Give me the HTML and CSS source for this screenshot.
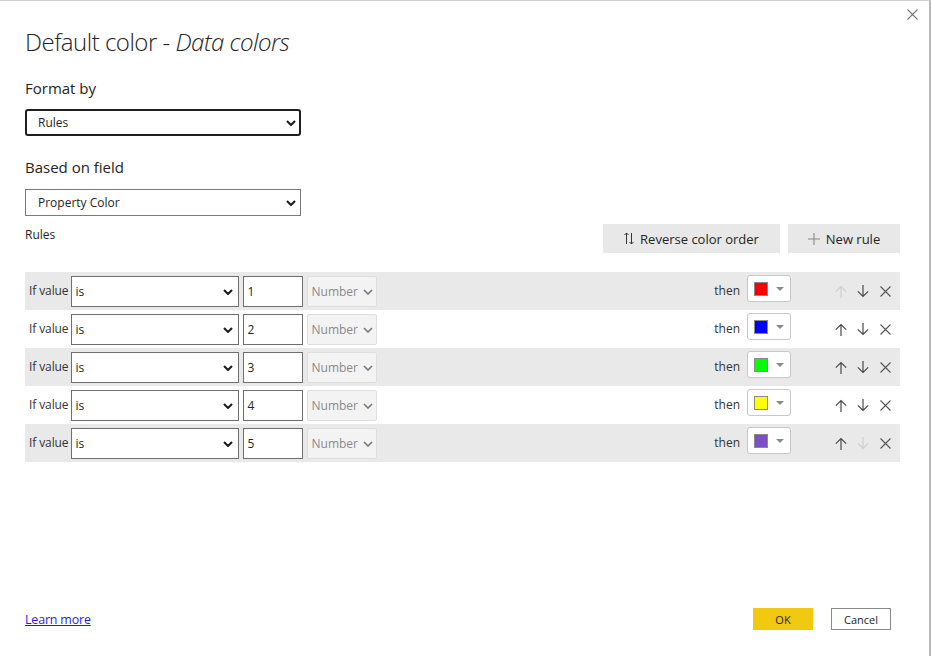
FILE: index.html
```html
<!DOCTYPE html>
<html lang="en">
<head>
<meta charset="utf-8">
<title>Default color - Data colors</title>
<link rel="stylesheet" href="styles.css">
</head>
<body>
<div class="dialog">
  <button class="close" aria-label="Close">
    <svg width="11" height="11" viewBox="0 0 11 11"><path d="M0.5 0.5 L10.5 10.5 M10.5 0.5 L0.5 10.5" stroke="#777" stroke-width="1.1" fill="none"/></svg>
  </button>

  <h1 class="title">Default color - <em>Data colors</em></h1>

  <div class="field-label">Format by</div>
  <div class="select select--focus">
    <span>Rules</span>
    <svg class="chev" width="10" height="6" viewBox="0 0 10 6"><path d="M1 1 L5 5 L9 1" stroke="#1a1a1a" stroke-width="2" fill="none"/></svg>
  </div>

  <div class="field-label field-label--second">Based on field</div>
  <div class="select select--field">
    <span>Property Color</span>
    <svg class="chev" width="10" height="6" viewBox="0 0 10 6"><path d="M1 1 L5 5 L9 1" stroke="#1a1a1a" stroke-width="2" fill="none"/></svg>
  </div>

  <div class="rules-head">
    <span class="small-label">Rules</span>
    <div class="toolbar">
      <button class="tool-btn tool-btn--reverse">
        <svg width="10" height="13" viewBox="0 0 10 13"><path d="M2.5 1 V12 M0.5 3 L2.5 1 L4.5 3 M7.5 1 V12 M5.5 10 L7.5 12 L9.5 10" stroke="#333" stroke-width="1" fill="none"/></svg>
        Reverse color order
      </button>
      <button class="tool-btn tool-btn--new">
        <svg width="12" height="12" viewBox="0 0 12 12"><path d="M6 0 V12 M0 6 H12" stroke="#8a8a8a" stroke-width="1.1" fill="none"/></svg>
        New rule
      </button>
    </div>
  </div>

  <div class="rules">
    <div class="rule rule--alt">
      <span class="if-label">If value</span>
      <div class="cond"><span>is</span><svg class="chev" width="10" height="6" viewBox="0 0 10 6"><path d="M1 1 L5 5 L9 1" stroke="#1a1a1a" stroke-width="2" fill="none"/></svg></div>
      <div class="val">1</div>
      <div class="type"><span>Number</span><svg width="10" height="6" viewBox="0 0 10 6"><path d="M1 1 L5 5 L9 1" stroke="#777" stroke-width="1.6" fill="none"/></svg></div>
      <span class="then">then</span>
      <div class="picker"><span class="swatch" style="background:#ff0000"></span><span class="caret"></span></div>
      <div class="actions">
        <svg class="act act--off" width="12" height="13" viewBox="0 0 12 13"><path d="M6 1.5 V13 M0.8 6.7 L6 1.5 L11.2 6.7" fill="none"/></svg>
        <svg class="act" width="12" height="13" viewBox="0 0 12 13"><path d="M6 0 V11.5 M0.8 6.3 L6 11.5 L11.2 6.3" fill="none"/></svg>
        <svg class="act act--x" width="11" height="11" viewBox="0 0 11 11"><path d="M0.5 0.5 L10.5 10.5 M10.5 0.5 L0.5 10.5" fill="none"/></svg>
      </div>
    </div>
    <div class="rule">
      <span class="if-label">If value</span>
      <div class="cond"><span>is</span><svg class="chev" width="10" height="6" viewBox="0 0 10 6"><path d="M1 1 L5 5 L9 1" stroke="#1a1a1a" stroke-width="2" fill="none"/></svg></div>
      <div class="val">2</div>
      <div class="type"><span>Number</span><svg width="10" height="6" viewBox="0 0 10 6"><path d="M1 1 L5 5 L9 1" stroke="#777" stroke-width="1.6" fill="none"/></svg></div>
      <span class="then">then</span>
      <div class="picker"><span class="swatch" style="background:#0000ff"></span><span class="caret"></span></div>
      <div class="actions">
        <svg class="act" width="12" height="13" viewBox="0 0 12 13"><path d="M6 1.5 V13 M0.8 6.7 L6 1.5 L11.2 6.7" fill="none"/></svg>
        <svg class="act" width="12" height="13" viewBox="0 0 12 13"><path d="M6 0 V11.5 M0.8 6.3 L6 11.5 L11.2 6.3" fill="none"/></svg>
        <svg class="act act--x" width="11" height="11" viewBox="0 0 11 11"><path d="M0.5 0.5 L10.5 10.5 M10.5 0.5 L0.5 10.5" fill="none"/></svg>
      </div>
    </div>
    <div class="rule rule--alt">
      <span class="if-label">If value</span>
      <div class="cond"><span>is</span><svg class="chev" width="10" height="6" viewBox="0 0 10 6"><path d="M1 1 L5 5 L9 1" stroke="#1a1a1a" stroke-width="2" fill="none"/></svg></div>
      <div class="val">3</div>
      <div class="type"><span>Number</span><svg width="10" height="6" viewBox="0 0 10 6"><path d="M1 1 L5 5 L9 1" stroke="#777" stroke-width="1.6" fill="none"/></svg></div>
      <span class="then">then</span>
      <div class="picker"><span class="swatch" style="background:#00ff00"></span><span class="caret"></span></div>
      <div class="actions">
        <svg class="act" width="12" height="13" viewBox="0 0 12 13"><path d="M6 1.5 V13 M0.8 6.7 L6 1.5 L11.2 6.7" fill="none"/></svg>
        <svg class="act" width="12" height="13" viewBox="0 0 12 13"><path d="M6 0 V11.5 M0.8 6.3 L6 11.5 L11.2 6.3" fill="none"/></svg>
        <svg class="act act--x" width="11" height="11" viewBox="0 0 11 11"><path d="M0.5 0.5 L10.5 10.5 M10.5 0.5 L0.5 10.5" fill="none"/></svg>
      </div>
    </div>
    <div class="rule">
      <span class="if-label">If value</span>
      <div class="cond"><span>is</span><svg class="chev" width="10" height="6" viewBox="0 0 10 6"><path d="M1 1 L5 5 L9 1" stroke="#1a1a1a" stroke-width="2" fill="none"/></svg></div>
      <div class="val">4</div>
      <div class="type"><span>Number</span><svg width="10" height="6" viewBox="0 0 10 6"><path d="M1 1 L5 5 L9 1" stroke="#777" stroke-width="1.6" fill="none"/></svg></div>
      <span class="then">then</span>
      <div class="picker"><span class="swatch" style="background:#ffff00"></span><span class="caret"></span></div>
      <div class="actions">
        <svg class="act" width="12" height="13" viewBox="0 0 12 13"><path d="M6 1.5 V13 M0.8 6.7 L6 1.5 L11.2 6.7" fill="none"/></svg>
        <svg class="act" width="12" height="13" viewBox="0 0 12 13"><path d="M6 0 V11.5 M0.8 6.3 L6 11.5 L11.2 6.3" fill="none"/></svg>
        <svg class="act act--x" width="11" height="11" viewBox="0 0 11 11"><path d="M0.5 0.5 L10.5 10.5 M10.5 0.5 L0.5 10.5" fill="none"/></svg>
      </div>
    </div>
    <div class="rule rule--alt">
      <span class="if-label">If value</span>
      <div class="cond"><span>is</span><svg class="chev" width="10" height="6" viewBox="0 0 10 6"><path d="M1 1 L5 5 L9 1" stroke="#1a1a1a" stroke-width="2" fill="none"/></svg></div>
      <div class="val">5</div>
      <div class="type"><span>Number</span><svg width="10" height="6" viewBox="0 0 10 6"><path d="M1 1 L5 5 L9 1" stroke="#777" stroke-width="1.6" fill="none"/></svg></div>
      <span class="then">then</span>
      <div class="picker"><span class="swatch" style="background:#7b4fc6"></span><span class="caret"></span></div>
      <div class="actions">
        <svg class="act" width="12" height="13" viewBox="0 0 12 13"><path d="M6 1.5 V13 M0.8 6.7 L6 1.5 L11.2 6.7" fill="none"/></svg>
        <svg class="act act--off" width="12" height="13" viewBox="0 0 12 13"><path d="M6 0 V11.5 M0.8 6.3 L6 11.5 L11.2 6.3" fill="none"/></svg>
        <svg class="act act--x" width="11" height="11" viewBox="0 0 11 11"><path d="M0.5 0.5 L10.5 10.5 M10.5 0.5 L0.5 10.5" fill="none"/></svg>
      </div>
    </div>
  </div>

  <div class="footer">
    <a class="learn" href="#">Learn more</a>
    <div class="footer-btns">
      <button class="btn btn--ok">OK</button>
      <button class="btn btn--cancel">Cancel</button>
    </div>
  </div>
</div>
</body>
</html>
```

FILE: styles.css
```css
* { box-sizing: border-box; }

html, body {
  margin: 0;
  padding: 0;
  background: #ffffff;
}

body {
  font-family: "Segoe UI", "Open Sans", "Liberation Sans", sans-serif;
  color: #252423;
}

.dialog {
  position: relative;
  width: 931px;
  height: 656px;
  border-top: 1px solid #cfcfcf;
  border-right: 2px solid #b9b9b9;
  padding: 25px 29px 0 25px;
  display: flex;
  flex-direction: column;
}

.close {
  position: absolute;
  top: 7px;
  right: 10px;
  width: 13px;
  height: 13px;
  padding: 1px;
  border: 0;
  background: none;
  display: flex;
}

.title {
  margin: 0;
  font-size: 24px;
  line-height: 32px;
  font-weight: 300;
  letter-spacing: -0.5px;
  color: #252423;
  white-space: nowrap;
}

.title em { font-style: italic; }

.field-label {
  margin-top: 19px;
  font-size: 15px;
  line-height: 22px;
  color: #252423;
}

.field-label--second { margin-top: 20px; }

.select {
  margin-top: 10px;
  width: 276px;
  height: 27px;
  border: 1px solid #7a7a7a;
  padding: 0 4px 0 12px;
  display: flex;
  align-items: center;
  justify-content: space-between;
  font-size: 12px;
}

.select--field { margin-top: 11px; }

.select--focus {
  border: 2px solid #1f1f1f;
  border-radius: 3px;
  padding-left: 11px;
  padding-right: 3px;
}

.rules-head {
  margin-top: 8px;
  display: flex;
  justify-content: space-between;
  align-items: flex-start;
}

.small-label {
  margin-top: 2px;
  font-size: 12px;
  line-height: 18px;
}

.toolbar {
  display: flex;
  gap: 8px;
}

.tool-btn {
  height: 29px;
  border: 0;
  background: #e8e8e8;
  font-family: inherit;
  font-size: 13px;
  color: #252423;
  display: flex;
  align-items: center;
  justify-content: center;
  gap: 6px;
  padding: 0;
}

.tool-btn--reverse { width: 177px; }
.tool-btn--new { width: 112px; }

.rules {
  margin-top: 19px;
  display: flex;
  flex-direction: column;
}

.rule {
  height: 38px;
  display: flex;
  align-items: center;
  padding: 4px 9px 3px 4px;
  background: #ffffff;
  font-size: 12px;
}

.rule--alt { background: #e9e9e9; }

.if-label {
  margin-right: 2px;
  margin-top: -2px;
  color: #333;
  white-space: nowrap;
  letter-spacing: -0.1px;
}

.cond {
  width: 168px;
  height: 31px;
  border: 1px solid #6f6f6f;
  background: #fff;
  display: flex;
  align-items: center;
  justify-content: space-between;
  padding: 0 5px 0 4px;
}

.val {
  margin-left: 4px;
  width: 60px;
  height: 31px;
  border: 1px solid #6f6f6f;
  background: #fff;
  display: flex;
  align-items: center;
  padding-left: 4px;
}

.type {
  margin-left: 4px;
  width: 70px;
  height: 31px;
  border: 1px solid #dedede;
  border-radius: 2px;
  background: #f3f3f3;
  color: #8a8a8a;
  display: flex;
  align-items: center;
  justify-content: space-between;
  padding: 0 3px 0 4px;
}

.then {
  margin-left: auto;
  margin-right: 7px;
  margin-top: -2px;
  color: #333;
}

.picker {
  align-self: flex-start;
  width: 44px;
  height: 27px;
  border: 1px solid #c8c8c8;
  border-radius: 3px;
  background: #fff;
  display: flex;
  align-items: center;
  padding-left: 6px;
  margin-top: -1px;
}

.swatch {
  width: 14px;
  height: 14px;
  border: 1px solid #8a8a8a;
}

.caret {
  margin-left: 8px;
  width: 0;
  height: 0;
  border-left: 4px solid transparent;
  border-right: 4px solid transparent;
  border-top: 4px solid #8a8a8a;
}

.actions {
  margin-left: 44px;
  display: flex;
  align-items: center;
  gap: 10px;
}

.act {
  stroke: #4a4a4a;
  stroke-width: 1.2;
}

.act--off { stroke: #cfcfcf; }

.act--x {
  stroke: #555;
  stroke-width: 1.1;
  margin-left: 1px;
}

.footer {
  margin-top: auto;
  margin-bottom: 26px;
  display: flex;
  justify-content: space-between;
  align-items: center;
}

.learn {
  font-size: 12.5px;
  letter-spacing: -0.2px;
  color: #1f1fd9;
  text-decoration: underline;
}

.footer-btns {
  display: flex;
  gap: 18px;
  margin-right: 9px;
}

.btn {
  width: 60px;
  height: 22px;
  font-family: inherit;
  font-size: 11px;
  color: #252423;
  padding: 0;
}

.btn--ok {
  border: 0;
  background: #f2c811;
}

.btn--cancel {
  border: 1px solid #8a8a8a;
  background: #fff;
}
```
